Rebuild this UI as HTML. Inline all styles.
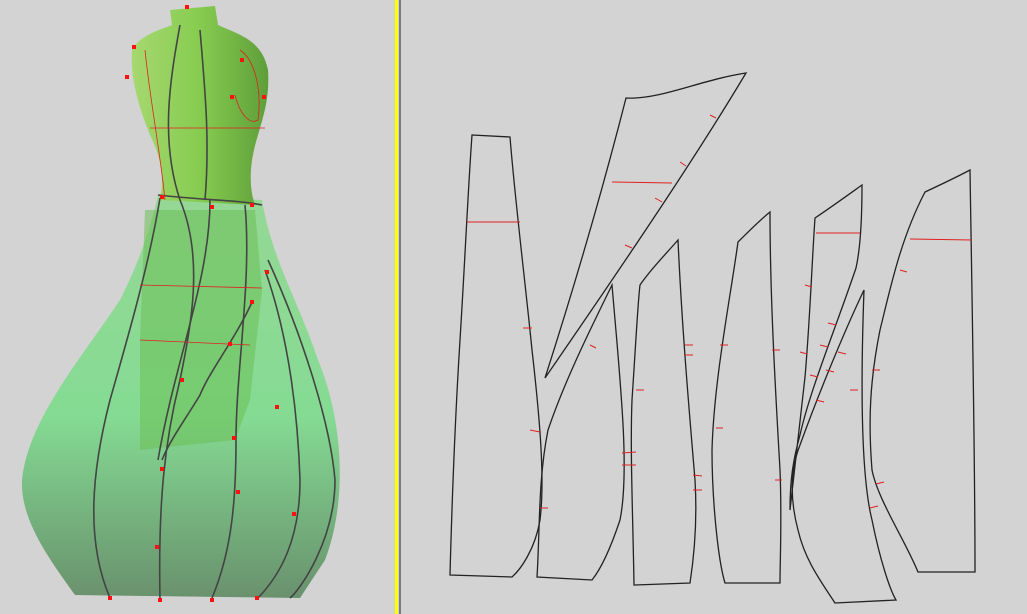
<!DOCTYPE html>
<html><head><style>
html,body{margin:0;padding:0;background:#d3d3d3;width:1027px;height:614px;overflow:hidden}
</style></head><body>
<svg width="1027" height="614" viewBox="0 0 1027 614" xmlns="http://www.w3.org/2000/svg" style="position:absolute;left:0;top:0">
<defs>
<linearGradient id="sk" x1="0" y1="0" x2="0" y2="1">
<stop offset="0" stop-color="#8fd88f"/><stop offset="0.55" stop-color="#7cdc8c"/><stop offset="0.8" stop-color="#6aae74"/><stop offset="1" stop-color="#5e8a62"/>
</linearGradient>
<linearGradient id="bd" x1="0" y1="0" x2="1" y2="0">
<stop offset="0" stop-color="#a6d870"/><stop offset="0.5" stop-color="#86cc50"/><stop offset="1" stop-color="#5e9e3a"/>
</linearGradient>
</defs>
<rect x="395" y="0" width="3" height="614" fill="#ffff00"/>
<rect x="399" y="0" width="2" height="614" fill="#7a7a7a"/>
<path d="M158,195 L262,200 C272,260 298,300 318,360 C343,420 348,500 325,560 L300,598 L75,595 C50,560 20,520 22,480 C28,420 80,360 120,300 C140,260 150,230 158,195 Z" fill="url(#sk)" opacity="0.9"/>
<path d="M170,10 L215,6 L218,25 C240,35 262,40 268,70 C270,100 262,120 258,135 C250,160 248,185 255,205 L160,200 C165,175 160,155 150,135 C140,110 130,80 132,50 C140,35 160,30 172,25 Z" fill="url(#bd)"/>
<path d="M145,210 L255,210 L262,290 L250,400 L235,440 L140,450 L140,340 Z" fill="#6cbf55" opacity="0.55"/>
<g fill="none" stroke="#444" stroke-width="1.6">
<path d="M180,25 C170,80 160,140 180,200 C205,260 190,330 180,380 C165,440 158,500 160,600"/>
<path d="M210,200 C210,280 175,360 158,460"/>
<path d="M160,198 C150,260 130,330 110,400 C92,470 85,540 110,598"/>
<path d="M245,205 C252,280 236,370 236,440 C236,500 232,550 212,598"/>
<path d="M265,270 C290,340 298,420 300,480 C300,540 280,575 258,598"/>
<path d="M268,260 C300,330 330,420 335,480 C335,540 300,590 290,598"/>
<path d="M253,300 C235,340 210,370 200,395 C185,420 170,440 162,460"/>
<path d="M200,30 C205,90 210,140 205,200"/>
<path d="M158,195 C200,200 240,200 262,205"/>
</g>
<g fill="none" stroke="#e02020" stroke-width="0.8">
<path d="M150,128 L265,128"/><path d="M140,285 L262,288"/><path d="M140,340 L250,345"/>
<path d="M145,50 C150,100 160,150 165,200"/><path d="M240,50 C255,60 262,90 258,120 C250,125 240,115 235,95"/>
</g>
<g fill="#ff1010">
<rect x="185" y="5" width="4" height="4"/><rect x="132" y="45" width="4" height="4"/><rect x="125" y="75" width="4" height="4"/>
<rect x="240" y="58" width="4" height="4"/><rect x="230" y="95" width="4" height="4"/><rect x="262" y="95" width="4" height="4"/>
<rect x="160" y="195" width="4" height="4"/><rect x="210" y="205" width="4" height="4"/><rect x="250" y="203" width="4" height="4"/>
<rect x="108" y="596" width="4" height="4"/><rect x="158" y="598" width="4" height="4"/><rect x="210" y="598" width="4" height="4"/><rect x="255" y="596" width="4" height="4"/>
<rect x="180" y="378" width="4" height="4"/><rect x="228" y="342" width="4" height="4"/><rect x="232" y="436" width="4" height="4"/><rect x="236" y="490" width="4" height="4"/><rect x="292" y="512" width="4" height="4"/><rect x="155" y="545" width="4" height="4"/><rect x="160" y="467" width="4" height="4"/><rect x="275" y="405" width="4" height="4"/><rect x="265" y="270" width="4" height="4"/><rect x="250" y="300" width="4" height="4"/>
</g>
<g fill="none" stroke="#222" stroke-width="1.3">
<path d="M472,135 L510,137 C515,200 525,280 532,350 C540,420 545,480 540,520 C535,550 520,570 512,577 L450,575 C452,500 455,420 460,340 C465,260 468,190 472,135 Z"/>
<path d="M626,98 C660,100 700,80 746,73 C700,150 640,240 545,378 C570,300 600,200 626,98 Z"/>
<path d="M612,285 C620,380 630,470 620,520 C610,550 600,570 592,580 L537,577 C540,530 538,480 548,430 C565,380 590,330 612,285 Z"/>
<path d="M678,240 C682,330 690,420 695,480 C698,530 692,570 690,583 L634,585 C633,520 630,450 632,400 C636,340 638,300 640,285 C650,270 665,255 678,240 Z"/>
<path d="M770,212 C770,300 776,400 780,470 C782,520 780,560 780,583 L725,583 C718,560 712,500 712,450 C714,380 730,300 738,242 C748,232 760,220 770,212 Z"/>
<path d="M862,185 C862,220 860,250 856,268 C835,330 810,390 800,435 C793,460 790,480 790,510 L805,377 C810,320 812,260 815,218 C830,208 848,195 862,185 Z"/>
<path d="M864,290 C860,400 862,480 872,520 C880,560 890,590 896,600 L835,603 C820,580 805,560 798,530 C790,500 790,470 800,445 C820,390 845,330 864,290 Z"/>
<path d="M970,170 C972,300 975,450 975,572 L918,572 C905,540 878,500 872,470 C868,420 870,380 880,330 C890,290 900,240 925,192 C940,185 955,178 970,170 Z"/>
</g>
<g stroke="#e02020" stroke-width="1">
<line x1="467" y1="222" x2="520" y2="222"/><line x1="612" y1="182" x2="672" y2="183"/><line x1="816" y1="233" x2="860" y2="233"/><line x1="910" y1="239" x2="972" y2="240"/>
<line x1="523" y1="328" x2="532" y2="328"/><line x1="530" y1="430" x2="540" y2="432"/><line x1="540" y1="508" x2="548" y2="508"/>
<line x1="590" y1="345" x2="596" y2="348"/><line x1="625" y1="245" x2="632" y2="248"/><line x1="655" y1="198" x2="662" y2="202"/><line x1="680" y1="162" x2="686" y2="166"/><line x1="710" y1="115" x2="716" y2="118"/>
<line x1="685" y1="345" x2="693" y2="345"/><line x1="685" y1="355" x2="693" y2="355"/><line x1="636" y1="390" x2="644" y2="390"/><line x1="622" y1="465" x2="636" y2="465"/><line x1="622" y1="453" x2="636" y2="452"/><line x1="693" y1="475" x2="702" y2="476"/><line x1="693" y1="490" x2="702" y2="490"/>
<line x1="772" y1="350" x2="780" y2="350"/><line x1="720" y1="345" x2="728" y2="345"/><line x1="716" y1="428" x2="723" y2="428"/><line x1="775" y1="480" x2="782" y2="480"/>
<line x1="805" y1="285" x2="812" y2="287"/><line x1="828" y1="323" x2="836" y2="325"/><line x1="820" y1="345" x2="828" y2="347"/><line x1="800" y1="352" x2="807" y2="354"/><line x1="838" y1="352" x2="846" y2="354"/><line x1="810" y1="375" x2="818" y2="377"/><line x1="826" y1="370" x2="834" y2="372"/><line x1="816" y1="400" x2="824" y2="402"/><line x1="850" y1="390" x2="858" y2="390"/>
<line x1="900" y1="270" x2="907" y2="272"/><line x1="872" y1="370" x2="880" y2="370"/><line x1="876" y1="484" x2="884" y2="482"/><line x1="870" y1="508" x2="878" y2="506"/>
</g>
</svg>
</body></html>
